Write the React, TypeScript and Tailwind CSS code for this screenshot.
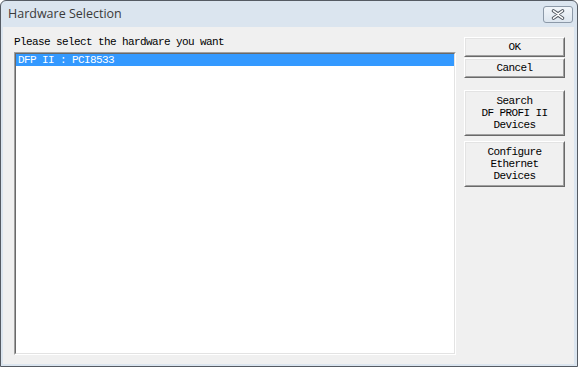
import React from 'react';

const mono = "font-['Liberation_Mono',monospace] text-[11px] tracking-[-0.6px] text-black";

function ClassicButton({ lines, className = '' }: { lines: string[]; className?: string }) {
  return (
    <button
      className={`w-[101px] border-t border-l border-t-white border-l-white border-b border-r border-b-[#696969] border-r-[#696969] bg-[#f0f0f0] ${className}`}
    >
      <div className="h-full flex flex-col items-center justify-center border-b border-r border-b-[#a0a0a0] border-r-[#a0a0a0] border-t border-l border-t-[#e3e3e3] border-l-[#e3e3e3]">
        {lines.map((l) => (
          <span key={l} className={`${mono} leading-[12px] block whitespace-pre`}>
            {l}
          </span>
        ))}
      </div>
    </button>
  );
}

export default function App() {
  return (
    <div className="w-[578px] h-[367px] bg-white">
      <div className="w-[578px] h-[367px] flex flex-col border border-[#555b63] rounded-t-[6px] bg-[#dbe5ef] pl-[2px] pr-[3px] pb-[2px]">
        {/* Title bar */}
        <div className="h-[26px] flex items-center shrink-0">
          <span className="pl-[5px] font-['Open_Sans',sans-serif] text-[12.5px] text-[#3a3a3a] leading-none">
            Hardware Selection
          </span>
          <div className="ml-auto mr-[1px] w-[30px] h-[17px] rounded-[3px] border border-[#8c99a8] bg-gradient-to-b from-[#f2f6fa] to-[#dde6ef] flex items-center justify-center">
            <svg width="14" height="11" viewBox="0 0 14 11">
              <path
                d="M2.5 1.8 L7 5 L11.5 1.8 M2.5 9.2 L7 6 L11.5 9.2"
                stroke="#535a63"
                strokeWidth="3.4"
                fill="none"
                strokeLinecap="round"
              />
              <path
                d="M2.5 1.8 L7 5 L11.5 1.8 M2.5 9.2 L7 6 L11.5 9.2"
                stroke="#ffffff"
                strokeWidth="1.5"
                fill="none"
                strokeLinecap="round"
              />
            </svg>
          </div>
        </div>

        {/* Client area */}
        <div className="flex-1 bg-[#f0f0f0] flex pl-[11px] pr-[9px] pt-[7px] pb-[9px] gap-[8px]">
          {/* Left column */}
          <div className="w-[443px] flex flex-col">
            <div className={`${mono} h-[18px] leading-[16px] whitespace-pre`}>Please select the hardware you want</div>
            <div className="flex-1 border-t border-l border-t-[#a0a0a0] border-l-[#a0a0a0] border-b border-r border-b-white border-r-white">
              <div className="h-full bg-white border-t border-l border-t-[#696969] border-l-[#696969] border-b border-r border-b-[#e3e3e3] border-r-[#e3e3e3]">
                <div className="h-[12px] bg-[#3399ff] flex items-center pl-[2px]">
                  <span className={`${mono} leading-[12px] text-white whitespace-pre`}>DFP II : PCI8533</span>
                </div>
              </div>
            </div>
          </div>

          {/* Right column */}
          <div className="flex flex-col pt-[3px]">
            <ClassicButton lines={['OK']} className="h-[20px]" />
            <ClassicButton lines={['Cancel']} className="h-[20px] mt-[1px]" />
            <ClassicButton lines={['Search', 'DF PROFI II', 'Devices']} className="h-[46px] mt-[12px]" />
            <ClassicButton lines={['Configure', 'Ethernet', 'Devices']} className="h-[46px] mt-[5px]" />
          </div>
        </div>
      </div>
    </div>
  );
}
